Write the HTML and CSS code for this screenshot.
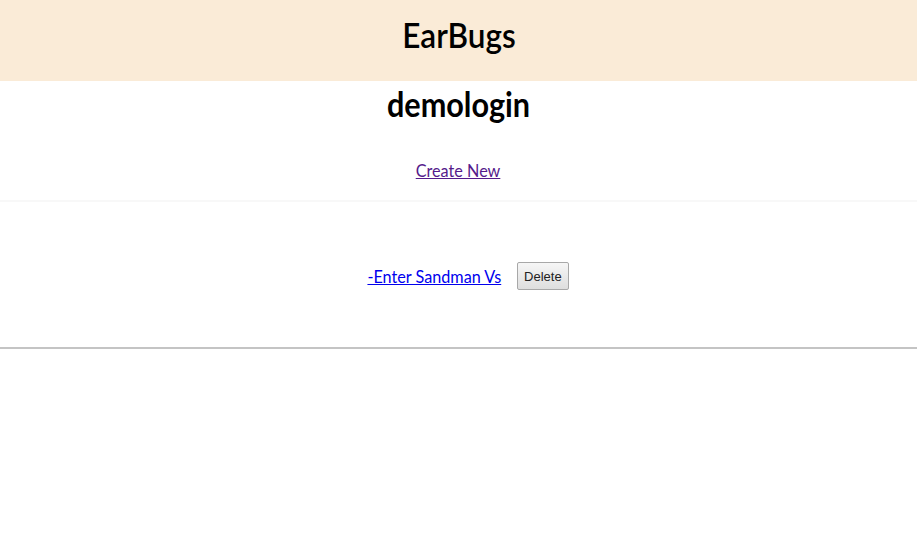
FILE: index.html
```html
<!DOCTYPE html>
<html>
<head>
<meta charset="utf-8">
<link rel="stylesheet" href="styles.css">
</head>
<body>
<header class="topbar">
  <h1 class="brand"><span class="narrow">EarBugs</span></h1>
</header>
<main>
  <h2 class="user"><span class="narrow">demologin</span></h2>
  <div class="create"><a href="#" class="visited narrow">Create New</a></div>
  <section class="list">
    <div class="entry">
      <a href="#" class="song narrow">-Enter Sandman Vs</a>
      <button class="del">Delete</button>
    </div>
  </section>
</main>
</body>
</html>
```
FILE: styles.css
```css
html, body {
  margin: 0;
  padding: 0;
  background: #fff;
  font-family: "Lato", "Noto Sans", sans-serif;
}
.narrow {
  display: inline-block;
  transform: scaleX(0.9);
}
.topbar {
  background: #faebd7;
  height: 81px;
  display: flex;
  align-items: flex-start;
  justify-content: center;
}
.brand {
  margin: 0;
  padding-top: 12px;
  line-height: 44px;
  font-family: "Lato", sans-serif;
  font-weight: 600;
  font-size: 35px;
  color: #000;
}
.user {
  margin: 2px 0 0;
  text-align: center;
  font-size: 34px;
  font-weight: 700;
  line-height: 42px;
}
.create {
  text-align: center;
  margin-top: 34px;
  font-size: 18px;
  height: 41px;
}
.create a {
  color: #551a8b;
  text-decoration: underline;
}
.list {
  border-top: 2px solid #f8f8f8;
  height: 145px;
  display: flex;
  align-items: center;
  justify-content: center;
  box-shadow: 0 2px 2px rgba(0,0,0,0.2);
  border-bottom: 2px solid #c4c4c4;
}
.entry {
  display: flex;
  align-items: center;
  gap: 8px;
  margin-top: 3px;
  padding-left: 12px;
}
.song {
  color: #0000ee;
  font-size: 18px;
  text-decoration: underline;
}
.del {
  font-family: "Liberation Sans", Arial, sans-serif;
  font-size: 13px;
  height: 28px;
  padding: 0 6px;
  background: linear-gradient(#f6f6f6, #dedede);
  border: 1px solid #a8a8a8;
  border-radius: 2px;
  color: #222;
}
```
